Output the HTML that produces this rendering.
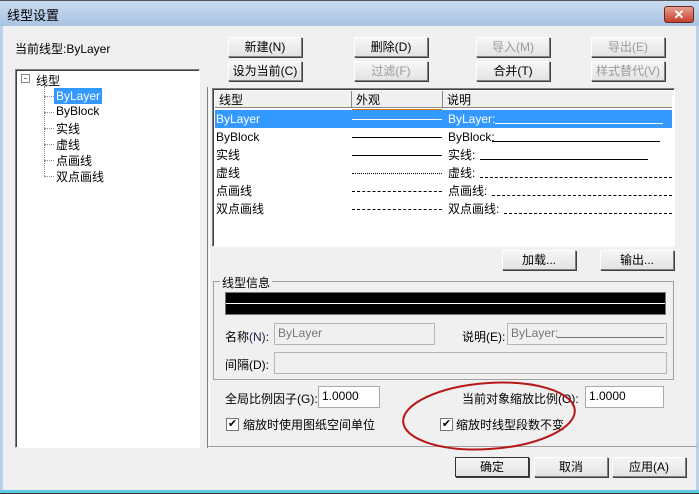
<!DOCTYPE html>
<html><head><meta charset="utf-8"><style>
*{margin:0;padding:0;box-sizing:border-box}
body{width:699px;height:494px;position:relative;overflow:hidden;background:#f0f0f0;font-family:"Liberation Sans","Noto Sans CJK SC",sans-serif;font-size:12px;color:#000}
.a{position:absolute;white-space:nowrap}
.btn{position:absolute;height:20px;background:linear-gradient(#f6f6f6,#e3e3e3);border:1px solid;border-color:#fff #808080 #808080 #fff;box-shadow:1px 1px 0 #404040;text-align:center;line-height:18px;font-size:12px}
.dis{color:#9a9a9a}
.sunk{position:absolute;border:1px solid;border-color:#808080 #fff #fff #808080;box-shadow:inset 1px 1px 0 #404040}
.inp{position:absolute;background:#fff;border:1px solid #aaa;padding:2px 3px;font-size:12px;height:22px}
.inpd{position:absolute;background:#f0f0f0;border:1px solid #b5b5b5;padding:2px 3px;font-size:12px;color:#777;height:22px;overflow:hidden;white-space:nowrap}
.row{position:absolute;left:215px;width:457px;height:18px;line-height:18px}
.cb{position:absolute;width:13px;height:13px;border:1px solid #777;background:#fff;font-size:11px;line-height:11px;text-align:center}
</style></head><body>
<div class="a" style="left:0;top:0;width:699px;height:26px;background:linear-gradient(#c9dbef,#a9c3e3);border-top:1px solid #555;"></div>
<div class="a" style="left:7px;top:5px;font-size:13px">线型设置</div>
<div class="a" style="left:664px;top:6px;width:30px;height:17px;background:linear-gradient(#e8a090,#c4402c);border:1px solid #6a2a20;border-radius:3px;color:#fff;font-weight:bold;text-align:center;line-height:15px;font-size:13px">✕</div>
<div class="a" style="left:0;top:26px;width:3px;height:468px;background:#b9d1ea"></div>
<div class="a" style="left:696px;top:26px;width:3px;height:468px;background:#b9d1ea"></div>
<div class="a" style="left:0;top:490px;width:699px;height:4px;background:#5ec8e0;border-bottom:1px solid #333"></div>

<div class="a" style="left:15px;top:40px">当前线型:ByLayer</div>
<div class="sunk" style="left:15px;top:69px;width:185px;height:379px;background:#fff"></div>
<div class="a" style="left:21px;top:74px;width:9px;height:9px;border:1px solid #888;font-size:9px;line-height:6px;text-align:center">-</div>
<div class="a" style="left:36px;top:72px">线型</div>
<div class="a" style="left:44px;top:86px;height:90px;border-left:1px dotted #888"></div>
<div class="a" style="left:44px;top:96px;width:10px;border-top:1px dotted #888"></div>
<div class="a" style="left:44px;top:112px;width:10px;border-top:1px dotted #888"></div>
<div class="a" style="left:44px;top:128px;width:10px;border-top:1px dotted #888"></div>
<div class="a" style="left:44px;top:144px;width:10px;border-top:1px dotted #888"></div>
<div class="a" style="left:44px;top:160px;width:10px;border-top:1px dotted #888"></div>
<div class="a" style="left:44px;top:176px;width:10px;border-top:1px dotted #888"></div>
<div class="a" style="left:54px;top:88px;background:#3399ff;color:#fff;padding:0 2px;line-height:16px">ByLayer</div>
<div class="a" style="left:56px;top:104px">ByBlock</div>
<div class="a" style="left:56px;top:120px">实线</div>
<div class="a" style="left:56px;top:136px">虚线</div>
<div class="a" style="left:56px;top:152px">点画线</div>
<div class="a" style="left:56px;top:168px">双点画线</div>

<div class="btn" style="left:228px;top:37px;width:74px">新建(N)</div>
<div class="btn" style="left:354px;top:37px;width:74px">删除(D)</div>
<div class="btn dis" style="left:476px;top:37px;width:74px">导入(M)</div>
<div class="btn dis" style="left:591px;top:37px;width:74px">导出(E)</div>
<div class="btn" style="left:228px;top:61px;width:74px">设为当前(C)</div>
<div class="btn dis" style="left:354px;top:61px;width:74px">过滤(F)</div>
<div class="btn" style="left:476px;top:61px;width:74px">合并(T)</div>
<div class="btn dis" style="left:591px;top:61px;width:74px">样式替代(V)</div>

<div class="a" style="left:207px;top:87px;width:3px;height:361px;border-left:1px solid #808080;border-right:1px solid #fff"></div>
<div class="a" style="left:207px;top:446px;width:490px;border-top:1px solid #a0a0a0"></div>
<div class="sunk" style="left:212px;top:88px;width:463px;height:159px;background:#fff"></div>
<div class="a" style="left:215px;top:91px;width:457px;height:17px;background:#f0f0f0;border-bottom:1px solid #888"></div>
<div class="a" style="left:219px;top:91px">线型</div>
<div class="a" style="left:351px;top:91px;height:17px;border-left:1px solid #888"></div>
<div class="a" style="left:356px;top:91px">外观</div>
<div class="a" style="left:442px;top:91px;height:17px;border-left:1px solid #888"></div>
<div class="a" style="left:447px;top:91px">说明</div>
<div class="a" style="left:352px;top:109px;width:90px;height:19px;border-top:1px solid #e07000;border-bottom:1px solid #e07000"></div>
<div class="row" style="top:110px;background:#3399ff;color:#fff"><span class="a" style="left:1px">ByLayer</span><span class="a" style="left:137px;top:9px;width:90px;border-top:1px solid #fff"></span><span class="a" style="left:233px">ByLayer: </span><span class="a" style="left:280px;top:13px;width:168px;border-top:1px solid #fff"></span></div>
<div class="row" style="top:128px"><span class="a" style="left:1px">ByBlock</span><span class="a" style="left:137px;top:9px;width:90px;border-top:1px solid #000"></span><span class="a" style="left:233px">ByBlock:</span><span class="a" style="left:277px;top:13px;width:168px;border-top:1px solid #000"></span></div>
<div class="row" style="top:146px"><span class="a" style="left:1px">实线</span><span class="a" style="left:137px;top:9px;width:90px;border-top:1px solid #000"></span><span class="a" style="left:233px">实线:</span><span class="a" style="left:265px;top:13px;width:168px;border-top:1px solid #000"></span></div>
<div class="row" style="top:164px"><span class="a" style="left:1px">虚线</span><span class="a" style="left:137px;top:9px;width:90px;border-top:1px dotted #000"></span><span class="a" style="left:233px">虚线:</span><span class="a" style="left:265px;top:13px;width:192px;border-top:1px dashed #000"></span></div>
<div class="row" style="top:182px"><span class="a" style="left:1px">点画线</span><span class="a" style="left:137px;top:9px;width:90px;border-top:1px dashed #000"></span><span class="a" style="left:233px">点画线:</span><span class="a" style="left:277px;top:13px;width:180px;border-top:1px dashed #000"></span></div>
<div class="row" style="top:200px"><span class="a" style="left:1px">双点画线</span><span class="a" style="left:137px;top:9px;width:90px;border-top:1px dashed #000"></span><span class="a" style="left:233px">双点画线:</span><span class="a" style="left:289px;top:13px;width:168px;border-top:1px dashed #000"></span></div>

<div class="btn" style="left:502px;top:250px;width:74px">加载...</div>
<div class="btn" style="left:600px;top:250px;width:74px">输出...</div>

<div class="a" style="left:213px;top:281px;width:461px;height:99px;border:1px solid #a0a0a0"></div>
<div class="a" style="left:220px;top:274px;background:#f0f0f0;padding:0 2px">线型信息</div>
<div class="a" style="left:225px;top:292px;width:441px;height:23px;background:#000;border:1px solid #777"></div>
<div class="a" style="left:226px;top:303px;width:439px;border-top:1px solid #fff"></div>
<div class="a" style="left:225px;top:328px">名称<span style="color:#224">(N)</span>:</div>
<div class="inpd" style="left:274px;top:323px;width:161px">ByLayer</div>
<div class="a" style="left:462px;top:328px">说明(E):</div>
<div class="inpd" style="left:507px;top:323px;width:160px">ByLayer:</div>
<div class="a" style="left:557px;top:337px;width:107px;border-top:1px solid #777"></div>
<div class="a" style="left:225px;top:356px">间隔(D):</div>
<div class="inpd" style="left:274px;top:352px;width:393px"></div>

<div class="a" style="left:225px;top:390px">全局比例因子(G):</div>
<div class="inp" style="left:318px;top:386px;width:62px">1.0000</div>
<div class="a" style="left:462px;top:390px">当前对象缩放比例(O):</div>
<div class="inp" style="left:585px;top:386px;width:79px">1.0000</div>
<div class="cb" style="left:226px;top:418px">✔</div>
<div class="a" style="left:243px;top:416px">缩放时使用图纸空间单位</div>
<div class="cb" style="left:440px;top:418px">✔</div>
<div class="a" style="left:456px;top:416px">缩放时线型段数不变</div>
<svg class="a" style="left:0;top:0" width="699" height="494"><ellipse cx="489" cy="416" rx="86" ry="33" transform="rotate(-4 489 416)" fill="none" stroke="#b81818" stroke-width="2"/></svg>

<div class="btn" style="left:455px;top:457px;width:74px;border-color:#333">确定</div>
<div class="btn" style="left:534px;top:457px;width:74px">取消</div>
<div class="btn" style="left:612px;top:457px;width:74px">应用(A)</div>
</body></html>
